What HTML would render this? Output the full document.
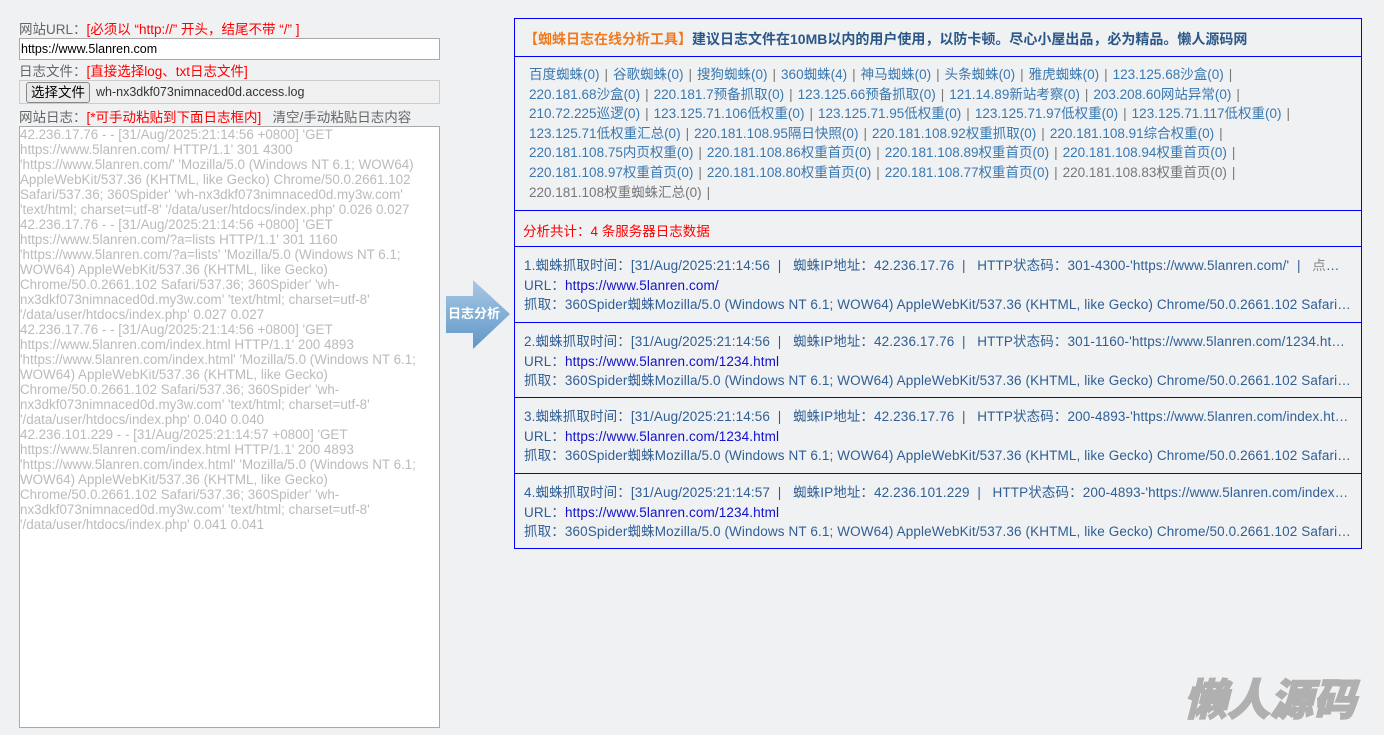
<!DOCTYPE html>
<html><head><meta charset="utf-8"><style>
*{margin:0;padding:0;box-sizing:border-box}
body{width:1384px;height:735px;background:#f0f1f3;font-family:"Liberation Sans","Noto Sans CJK SC",sans-serif;font-size:13px;position:relative;overflow:hidden}
.a{position:absolute;white-space:nowrap}
.lbl{color:#666;font-size:13.5px}
.red{color:#f00}
#url{left:19px;top:38px;width:421px;height:22px;border:1px solid #aaa;background:#fff;padding:3px 0 0 1px;color:#000;font-size:12.5px}
#file{left:19px;top:80px;width:421px;height:24px;border:1px solid #ccc;background:#f0f0f0}
#btn{position:absolute;left:6px;top:1px;height:21px;padding:0 4px;border:1px solid #888;border-radius:3px;background:#e9e9e9;font-size:13.5px;line-height:19px}
#ta{left:19px;top:126px;width:421px;height:602px;border:1px solid #aaa;background:#fff;color:#bbb;font-size:13.4px;line-height:15px;padding:0 14px 0 0;white-space:normal}
#panel{left:514px;top:18px;width:848px;height:531px;border:1px solid #00f}
.sec{position:absolute;left:0;width:846px;border-bottom:1px solid #00f}
.lk{color:#3a78b0;line-height:19.6px;padding:8px 0 0 14px;font-size:13.5px;letter-spacing:0;white-space:nowrap}
.lk i{font-style:normal;color:#777;padding:0 5px}
.g{color:#777}
.en{color:#2f5f95;line-height:19.6px;padding:9px 10px 0 9px;white-space:nowrap;overflow:hidden;font-size:13.5px;letter-spacing:0.12px}
.en div{overflow:hidden;text-overflow:ellipsis;width:828px}
.en b{font-weight:normal;color:#11c}
</style></head><body>
<div class="a lbl" style="left:19px;top:18px">网站URL：<span class="red">[必须以 “http://” 开头，结尾不带 “/” ]</span></div>
<div class="a" id="url">https://www.5lanren.com</div>
<div class="a lbl" style="left:19px;top:60px">日志文件：<span class="red">[直接选择log、txt日志文件]</span></div>
<div class="a" id="file"><span id="btn">选择文件</span><span style="position:absolute;left:76px;top:4px;font-size:12.5px;color:#333">wh-nx3dkf073nimnaced0d.access.log</span></div>
<div class="a lbl" style="left:19px;top:106px">网站日志：<span class="red">[*可手动粘贴到下面日志框内]</span>&nbsp;&nbsp;&nbsp;清空/手动粘贴日志内容</div>
<div class="a" id="ta">42.236.17.76 - - [31/Aug/2025:21:14:56 +0800] 'GET https://www.5lanren.com/ HTTP/1.1' 301 4300 'https://www.5lanren.com/' 'Mozilla/5.0 (Windows NT 6.1; WOW64) AppleWebKit/537.36 (KHTML, like Gecko) Chrome/50.0.2661.102 Safari/537.36; 360Spider' 'wh-nx3dkf073nimnaced0d.my3w.com' 'text/html; charset=utf-8' '/data/user/htdocs/index.php' 0.026 0.027<br>42.236.17.76 - - [31/Aug/2025:21:14:56 +0800] 'GET https://www.5lanren.com/?a=lists HTTP/1.1' 301 1160 'https://www.5lanren.com/?a=lists' 'Mozilla/5.0 (Windows NT 6.1; WOW64) AppleWebKit/537.36 (KHTML, like Gecko) Chrome/50.0.2661.102 Safari/537.36; 360Spider' 'wh-nx3dkf073nimnaced0d.my3w.com' 'text/html; charset=utf-8' '/data/user/htdocs/index.php' 0.027 0.027<br>42.236.17.76 - - [31/Aug/2025:21:14:56 +0800] 'GET https://www.5lanren.com/index.html HTTP/1.1' 200 4893 'https://www.5lanren.com/index.html' 'Mozilla/5.0 (Windows NT 6.1; WOW64) AppleWebKit/537.36 (KHTML, like Gecko) Chrome/50.0.2661.102 Safari/537.36; 360Spider' 'wh-nx3dkf073nimnaced0d.my3w.com' 'text/html; charset=utf-8' '/data/user/htdocs/index.php' 0.040 0.040<br>42.236.101.229 - - [31/Aug/2025:21:14:57 +0800] 'GET https://www.5lanren.com/index.html HTTP/1.1' 200 4893 'https://www.5lanren.com/index.html' 'Mozilla/5.0 (Windows NT 6.1; WOW64) AppleWebKit/537.36 (KHTML, like Gecko) Chrome/50.0.2661.102 Safari/537.36; 360Spider' 'wh-nx3dkf073nimnaced0d.my3w.com' 'text/html; charset=utf-8' '/data/user/htdocs/index.php' 0.041 0.041</div>
<svg class="a" style="left:446px;top:280px" width="66" height="70"><defs><linearGradient id="g" x1="0" y1="0" x2="0" y2="1"><stop offset="0" stop-color="#a9c8e4"/><stop offset="1" stop-color="#5f97c8"/></linearGradient></defs><path d="M0 16H27V0L64 34 27 69V53H0Z" fill="url(#g)"/><text x="28" y="38" fill="#fff" font-size="13" font-weight="bold" text-anchor="middle" font-family="Noto Sans CJK SC,sans-serif">日志分析</text></svg>
<div class="a" id="panel">
<div class="sec" style="top:0;height:38px;padding:10px 0 0 9px;font-weight:bold;color:#2a5788;font-size:14px;letter-spacing:0">
<span style="color:#f07a20">【蜘蛛日志在线分析工具】</span>建议日志文件在10MB以内的用户使用，以防卡顿。尽心小屋出品，必为精品。懒人源码网</div>
<div class="sec lk" style="top:38px;height:154px">百度蜘蛛(0)<i>|</i>谷歌蜘蛛(0)<i>|</i>搜狗蜘蛛(0)<i>|</i>360蜘蛛(4)<i>|</i>神马蜘蛛(0)<i>|</i>头条蜘蛛(0)<i>|</i>雅虎蜘蛛(0)<i>|</i>123.125.68沙盒(0)<i>|</i><br>220.181.68沙盒(0)<i>|</i>220.181.7预备抓取(0)<i>|</i>123.125.66预备抓取(0)<i>|</i>121.14.89新站考察(0)<i>|</i>203.208.60网站异常(0)<i>|</i><br>210.72.225巡逻(0)<i>|</i>123.125.71.106低权重(0)<i>|</i>123.125.71.95低权重(0)<i>|</i>123.125.71.97低权重(0)<i>|</i>123.125.71.117低权重(0)<i>|</i><br>123.125.71低权重汇总(0)<i>|</i>220.181.108.95隔日快照(0)<i>|</i>220.181.108.92权重抓取(0)<i>|</i>220.181.108.91综合权重(0)<i>|</i><br>220.181.108.75内页权重(0)<i>|</i>220.181.108.86权重首页(0)<i>|</i>220.181.108.89权重首页(0)<i>|</i>220.181.108.94权重首页(0)<i>|</i><br>220.181.108.97权重首页(0)<i>|</i>220.181.108.80权重首页(0)<i>|</i>220.181.108.77权重首页(0)<i>|</i><span class="g">220.181.108.83权重首页(0)</span><i>|</i><br><span class="g">220.181.108权重蜘蛛汇总(0)</span><i>|</i></div>
<div class="sec" style="top:192px;height:36px;color:#f00;padding:9px 0 0 8px;font-size:13.5px">分析共计：4 条服务器日志数据</div>
<div class="sec en" style="top:228px;height:76px"><div>1.蜘蛛抓取时间：[31/Aug/2025:21:14:56 &nbsp;| &nbsp;&nbsp;蜘蛛IP地址：42.236.17.76 &nbsp;| &nbsp;&nbsp;HTTP状态码：301-4300-'https://www.5lanren.com/' &nbsp;| &nbsp;&nbsp;<span style="color:#888">点击查看详情</span></div><div>URL：<b>https://www.5lanren.com/</b></div><div>抓取：360Spider蜘蛛Mozilla/5.0 (Windows NT 6.1; WOW64) AppleWebKit/537.36 (KHTML, like Gecko) Chrome/50.0.2661.102 Safari/537.36</div></div>
<div class="sec en" style="top:304px;height:75px"><div>2.蜘蛛抓取时间：[31/Aug/2025:21:14:56 &nbsp;| &nbsp;&nbsp;蜘蛛IP地址：42.236.17.76 &nbsp;| &nbsp;&nbsp;HTTP状态码：301-1160-'https://www.5lanren.com/1234.html' | 点击查看</div><div>URL：<b>https://www.5lanren.com/1234.html</b></div><div>抓取：360Spider蜘蛛Mozilla/5.0 (Windows NT 6.1; WOW64) AppleWebKit/537.36 (KHTML, like Gecko) Chrome/50.0.2661.102 Safari/537.36</div></div>
<div class="sec en" style="top:379px;height:76px"><div>3.蜘蛛抓取时间：[31/Aug/2025:21:14:56 &nbsp;| &nbsp;&nbsp;蜘蛛IP地址：42.236.17.76 &nbsp;| &nbsp;&nbsp;HTTP状态码：200-4893-'https://www.5lanren.com/index.html' | 点击</div><div>URL：<b>https://www.5lanren.com/1234.html</b></div><div>抓取：360Spider蜘蛛Mozilla/5.0 (Windows NT 6.1; WOW64) AppleWebKit/537.36 (KHTML, like Gecko) Chrome/50.0.2661.102 Safari/537.36</div></div>
<div class="sec en" style="top:455px;height:75px;border-bottom:none"><div>4.蜘蛛抓取时间：[31/Aug/2025:21:14:57 &nbsp;| &nbsp;&nbsp;蜘蛛IP地址：42.236.101.229 &nbsp;| &nbsp;&nbsp;HTTP状态码：200-4893-'https://www.5lanren.com/index.html' | 点击</div><div>URL：<b>https://www.5lanren.com/1234.html</b></div><div>抓取：360Spider蜘蛛Mozilla/5.0 (Windows NT 6.1; WOW64) AppleWebKit/537.36 (KHTML, like Gecko) Chrome/50.0.2661.102 Safari/537.36</div></div>
</div>
<div class="a" style="left:1184px;top:672px;font-size:43px;font-weight:900;font-style:italic;color:#b0b0b0;letter-spacing:0px;line-height:50px;-webkit-text-stroke:1.5px #b0b0b0;text-shadow:0 0 2px #fff,0 0 2px #fff;font-family:'Noto Sans CJK SC',sans-serif">懒人源码</div>
</body></html>
